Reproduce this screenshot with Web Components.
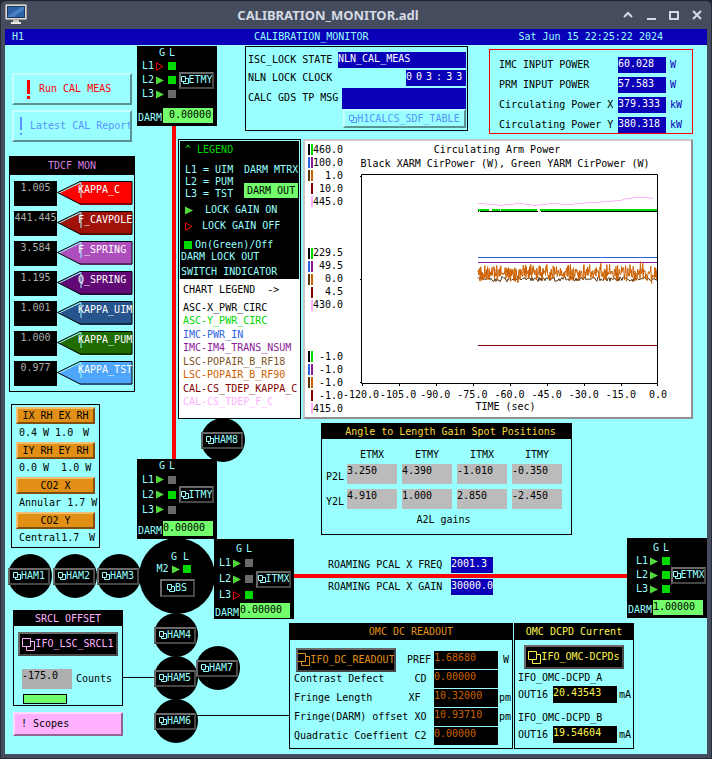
<!DOCTYPE html>
<html lang="en">
<head>
<meta charset="utf-8">
<title>CALIBRATION_MONITOR.adl</title>
<style>
  body { margin: 0; background: #232733; font: 10px/12px "DejaVu Sans Mono", "Liberation Mono", monospace; color: #000; }
</style>
</head>
<body>
<app-window heading="CALIBRATION_MONITOR.adl">
  <calibration-screen></calibration-screen>
</app-window>

<script>
const SHARED = `
  *, :host { box-sizing: border-box; }
  :host([hidden]) { display: none; }
  button { font: inherit; color: inherit; margin: 0; padding: 0; cursor: pointer; white-space: pre; border-radius: 0; }
  .row { display: flex; }
  svg { display: block; flex: none; }
`;

function define(name, render, ready) {
  customElements.define(name, class extends HTMLElement {
    connectedCallback() {
      if (this.shadowRoot) return;
      const t = document.createElement('template');
      const markup = render(n => this.getAttribute(n) ?? '', this).trim().replace(/>\s*\n\s*</g, '><');
      t.innerHTML = '<style>' + SHARED + '</style>' + markup;
      this.attachShadow({ mode: 'open' }).append(t.content.cloneNode(true));
      if (ready) ready(this);
    }
  });
}

/* Window frame */
define('app-window', a => `
  <style>
    :host { display: flex; flex-direction: column; min-height: 100vh; padding: 0 5px 5px; background: #444c5e;
      border-radius: 6px 6px 0 0; box-shadow: inset 0 1px #1d212b, inset 1px 0 #262b38, inset -1px 0 #262b38, inset 0 -1px #262b38; }
    header { display: flex; align-items: center; height: 29px; gap: 14px; padding-right: 5px; }
    h1 { flex: 1; margin: 0 0 0 6px; text-align: center; font: bold 13px/18px "Noto Sans", sans-serif; color: #d5dae4; }
    header button { border: 0; background: none; color: #d5dae4; width: 10px; }
    .tools { display: flex; gap: 13px; }
    slot { display: contents; }
  </style>
  <header>
    <svg width="22" height="21" viewBox="0 0 22 21"><rect x=".5" y=".5" width="21" height="15" rx="1" fill="#ddd9cf" stroke="#aaa69c"/><rect x="2" y="2" width="18" height="12" fill="#123768"/><path d="M3 3h16v10H3z" fill="#2d62a5"/><path d="M3 12 16 3h3v3L9 13H3z" fill="#477fc0"/><path d="M8 16h6v2H8z" fill="#c9c6be"/><path d="M6 18h10v2H6z" fill="#eceae4"/></svg>
    <h1>${a('heading')}</h1>
    <div class="tools">
      <button aria-label="Shade"><svg width="10" height="12" viewBox="0 0 10 12" fill="none" stroke="currentColor" stroke-width="2"><path d="M1 8l4-4 4 4"/></svg></button>
      <button aria-label="Minimize"><svg width="10" height="12" viewBox="0 0 10 12"><path d="M1 9h9v2H1z" fill="currentColor"/></svg></button>
      <button aria-label="Maximize"><svg width="10" height="12" viewBox="0 0 10 12" fill="none" stroke="currentColor" stroke-width="2"><path d="M1 3h8v7H1z"/></svg></button>
      <button aria-label="Close"><svg width="10" height="12" viewBox="0 0 10 12" fill="none" stroke="currentColor" stroke-width="2"><path d="M1 2l8 8M9 2l-8 8"/></svg></button>
    </div>
  </header>
  <slot></slot>`);

/* Bevelled push button */
define('bevel-button', (a, el) => {
  const big = '<svg width="13" height="13" viewBox="0 0 13 13" fill="none" stroke="currentColor"><path d="M.5.5h8v8h-8zM8.5 3.5h4v9h-8v-4"/></svg>';
  const small = '<svg width="8" height="8" viewBox="0 0 8 8" fill="none" stroke="currentColor"><path d="M.5.5h4v5h-4zM4.5 2.5h3v5h-5v-2"/></svg>';
  const icon = a('icon') === 'big' ? big : a('icon') === 'small' ? small : '';
  return `
  <style>
    :host { display: block; height: 17px; --face: #000; --hi: #696969; --lo: #464646; color: #99ffff; }
    :host([tone=cyan]) { --face: #99ffff; --hi: #c6ffff; --lo: #589392; }
    :host([tone=orange]) { --face: #e19015; --hi: #efbe70; --lo: #7f510c; color: #000; }
    :host([tone=pink]) { --face: #ffb0ff; --hi: #ffdcff; --lo: #916491; color: #000; }
    button { display: flex; align-items: center; justify-content: var(--align, center); width: 100%; height: 100%;
      padding-left: var(--pad, 0px); background: var(--face); border: 2px solid; border-color: var(--hi) var(--lo) var(--lo) var(--hi); overflow: hidden; }
    span { flex: none; }
  </style>
  <button>${icon}<slot name="mark"></slot><span><slot></slot></span></button>`;
});

/* Read-back field */
define('value-field', a => `
  <style>
    :host { display: block; width: 48px; height: 16px; background: #0a00b8; color: #fff; overflow: hidden; }
    :host([tone=green]) { width: 50px; height: 15px; background: #73ff6b; color: #000; }
    :host([tone=gray]) { width: 50px; height: 20px; background: #bbb; color: #000; }
    :host([tone=orange]) { width: 64px; height: 18px; background: #000; color: #cd6100; }
    :host([tone=yellow]) { width: 64px; height: 17px; background: #000; color: #fbf34a; }
    :host([tone=black]) { width: 43px; height: 25px; background: #000; color: #aeaeae; text-align: center; }
    output { display: block; line-height: 14px; white-space: pre; }
  </style>
  <output><slot></slot></output>`);

/* Outlined group with optional black caption */
define('group-box', a => `
  <style>
    :host { display: block; border: 1px solid #000; }
    h2 { margin: 0; background: #000; font: inherit; line-height: var(--cap, 15px); text-align: center; color: var(--cap-color); padding-left: var(--cap-pad, 0px); }
  </style>
  ${a('caption') ? `<h2>${a('caption')}</h2>` : ''}<slot></slot>`);

/* Calibration factor row: value and arrow tag */
define('factor-row', a => `
  <style>
    :host { display: flex; height: 25px; }
    div { display: grid; width: 76px; color: #fff; }
    div > * { grid-area: 1 / 1; }
    span { padding-left: 21px; line-height: 18px; }
  </style>
  <value-field tone="black">${a('value')}</value-field>
  <div><svg width="76" height="25" viewBox="0 0 76 25"><path d="M1 11.5 24 1h51v23H24z" fill="${a('color')}"/><path d="M2 12 24 1.500V17" fill="none" stroke="#99ffff"/><path d="M.5 11.500 23 .5h52V23H23z" fill="none" stroke="#000"/></svg><span>${a('name')}</span></div>`);

/* Gain arrow and lock-output lamp */
define('gain-arrow', a => `
  <style>:host { display: block; }</style>
  <svg width="8" height="9" viewBox="0 0 8 9">${a('state') === 'off'
    ? '<path d="M.5.800 7 4.500.5 8.200z" fill="none" stroke="#fd0000"/>'
    : '<path d="M0 .5 8 4.500 0 8.500z" fill="#52da3b"/>'}</svg>`);
define('output-lamp', a => `
  <style>:host { display: block; width: 8px; height: 8px; background: ${a('state') === 'off' ? '#696969' : '#00d800'}; }</style>`);

/* Suspended optic block */
define('optic-node', a => `
  <style>
    :host { display: flex; flex-direction: column; width: 80px; height: 80px; background: #000; color: #99ffff; --indent: 5px; --pitch: 14px; --top: 1px; --gap: 3px; }
    .head { padding: var(--top) 0 0 calc(var(--indent) + 17px); }
    .head span { width: 10px; }
    .body { display: flex; align-items: center; gap: var(--gap); }
    .levels { padding-left: var(--indent); }
    .levels .row { height: var(--pitch); align-items: center; }
    gain-arrow { margin: 0 4px 0 2px; }
    bevel-button { width: 35px; }
    .foot { align-items: flex-end; margin-top: auto; padding: 0 0 3px 1px; }
    .foot span { width: 25px; line-height: 10px; }
  </style>
  <div class="row head"><span>G</span><span>L</span></div>
  <div class="body">
    <div class="levels">${[1, 2, 3].map(n => `<div class="row"><span>L${n}</span><gain-arrow state="${a('gain').split(' ')[n - 1]}"></gain-arrow><output-lamp state="${a('out').split(' ')[n - 1]}"></output-lamp></div>`).join('')}</div>
    <bevel-button icon="small">${a('name')}</bevel-button>
  </div>
  <div class="row foot"><span>DARM</span><value-field tone="green">${a('darm')}</value-field></div>`);

/* Round vacuum chamber */
define('chamber-node', a => `
  <style>
    :host { display: flex; align-items: center; width: 44px; height: 44px; border-radius: 50%; background: #000; }
    bevel-button { width: 42px; }
  </style>
  <bevel-button icon="small">${a('name')}</bevel-button>`);

/* Beam splitter */
define('splitter-node', () => `
  <style>
    :host { display: flex; flex-direction: column; align-items: center; width: 76px; height: 76px; padding-top: 13px; border-radius: 50%; background: #000; color: #99ffff; }
    .head { gap: 6px; padding-left: 6px; }
    .lvl { align-items: center; gap: 3px; padding-right: 7px; }
    bevel-button { width: 35px; height: 18px; margin-top: 4px; }
  </style>
  <div class="row head"><span>G</span><span>L</span></div>
  <div class="row lvl"><span>M2</span><gain-arrow></gain-arrow><output-lamp></output-lamp></div>
  <bevel-button icon="small">BS</bevel-button>`);

/* Legend */
define('screen-legend', () => `
  <style>
    :host { display: flex; flex-direction: column; background: #fff; border: 1px solid #000; width: 123px; }
    .dark { background: #000; color: #99ffff; border: 1px solid #99ffff; border-bottom: 0; height: 139px; padding: 3px 1px 0; }
    .title { color: #00d800; padding: 0 4px 8px; }
    .levels { justify-content: space-between; padding-left: 4px; height: 36px; white-space: nowrap; }
    .levels > div:last-child { width: 54px; }
    .out { background: #73ff6b; color: #000; line-height: 15px; padding-left: 3px; margin-top: 7px; }
    .key { align-items: center; height: 16px; padding-left: 4px; gap: 12px; margin-top: 2px; }
    .key + .key { margin-top: 0; gap: 9px; }
    .lamp { align-items: center; gap: 3px; padding: 5px 0 0 3px; }
    .last { padding-top: 3px; }
    .light { flex: 1; display: flex; flex-direction: column; padding: 5px 4px 10px; white-space: pre; }
    ul { list-style: none; margin: 6px 0 0; padding: 0; flex: 1; display: flex; flex-direction: column; justify-content: space-between; }
  </style>
  <div class="dark">
    <div class="title">^ LEGEND</div>
    <div class="row levels"><div>L1 = UIM<br>L2 = PUM<br>L3 = TST</div><div><div>DARM MTRX</div><div class="out">DARM OUT</div></div></div>
    <div class="row key"><gain-arrow></gain-arrow><span>LOCK GAIN ON</span></div>
    <div class="row key"><gain-arrow state="off"></gain-arrow><span>LOCK GAIN OFF</span></div>
    <div class="row lamp"><output-lamp></output-lamp><span>On(Green)/Off</span></div>
    <div>DARM LOCK OUT</div>
    <div class="last">SWITCH INDICATOR</div>
  </div>
  <div class="light"><div>CHART LEGEND  -&gt;</div>
    <ul>
      <li>ASC-X_PWR_CIRC</li><li style="color:#00d800">ASC-Y_PWR_CIRC</li><li style="color:#2a63e4">IMC-PWR_IN</li>
      <li style="color:#8b1a96">IMC-IM4_TRANS_NSUM</li><li style="color:#7d5627">LSC-POPAIR_B_RF18</li><li style="color:#cd6100">LSC-POPAIR_B_RF90</li>
      <li style="color:#820400">CAL-CS_TDEP_KAPPA_C</li><li style="color:#ffb0ff">CAL-CS_TDEP_F_C</li>
    </ul>
  </div>`);

/* Strip chart */
define('strip-chart', () => {
  const bars = [['#000', '#00d800'], ['#2a63e4', '#8b1a96'], ['#58340f', '#cd6100'], ['transparent', '#820400'], ['transparent', '#ffb0ff']];
  const scales = [['460.0', '100.0', '1.0', '10.0', '445.0'], ['229.5', '49.5', '0.0', '4.5', '430.0'], ['-1.0', '-1.0', '-1.0', '-1.0', '415.0']];
  let seed = 11;
  const rnd = () => (seed = (seed * 16807) % 2147483647) / 2147483647;
  const noise = (mid, amp, step, spike) => {
    let d = '';
    for (let x = 117; x <= 296; x += step) {
      let y = mid + (rnd() + rnd() - 1) * amp;
      if (rnd() < spike) y += (rnd() - .5) * 12;
      d += (d ? 'L' : 'M') + x.toFixed(1) + ' ' + y.toFixed(1);
    }
    return d;
  };
  return `
  <style>
    :host { display: grid; grid-template: 31px 1fr 33px / 35px minmax(0, 1fr); column-gap: 18px; background: #fff; padding: 2px 33px 0 3px;
      border: 2px solid; border-color: #c8c8c8 #919191 #919191 #c8c8c8; }
    .scales { grid-area: 1 / 1 / 4 / 2; display: flex; flex-direction: column; justify-content: space-between; padding-bottom: 2px; }
    .scale { height: 13px; align-items: center; }
    .scale i { width: 2px; height: 11px; margin-right: 1px; }
    .scale span { flex: 1; display: flex; justify-content: flex-end; margin-left: -2px; }
    h3 { grid-area: 1 / 2; margin: 0; font: inherit; line-height: 14px; white-space: nowrap; display: flex; flex-direction: column; align-items: center; }
    h3 span:first-child { margin-right: 25px; }
    h3 span + span { margin-right: 9px; }
    .plot { grid-area: 2 / 2; width: 100%; height: 100%; overflow: visible; }
    .plot path { vector-effect: non-scaling-stroke; fill: none; }
    .axis { grid-area: 3 / 2; }
    .ticks { justify-content: space-between; padding-top: 5px; }
    .ticks span { width: 0; display: flex; justify-content: center; }
    .ticks i { font-style: normal; flex: none; }
    .time { text-align: center; padding-right: 8px; }
  </style>
  <div class="scales">${scales.map(s => `<div>${s.map((v, i) => `<div class="row scale"><i style="background:${bars[i][0]}"></i><i style="background:${bars[i][1]}"></i><span>${v}</span></div>`).join('')}</div>`).join('')}</div>
  <h3><span>Circulating Arm Power</span><span>Black XARM CirPower (W), Green YARM CirPower (W)</span></h3>
  <svg class="plot" viewBox="0 0 297 210" preserveAspectRatio="none">
    <path stroke="#ffb0ff" d="M117 29.500h6l5 1h8l2 1h4l3-1h7l2-1h8l2 1h5l3 1h4l3-1h6l3-1h9l3 1h12l3-1h8l3-1h13l3-1h8l4-1h6l5-2h5l4-1h13l5 1"/>
    <path stroke="#00d800" stroke-width="2" d="M117 36h11m3 0h8m1 0h36m3 0h117"/><path stroke="#000" d="M117 37.500h1m1 0h58m3 0h117"/>
    <path stroke="#2a63e4" d="M117 83.500h180"/><path stroke="#8b1a96" d="M117 88.500h180"/>
    <path stroke="#58340f" d="${noise(105, 3, 1, 0)}"/><path stroke="#cd6100" d="${noise(99, 10, .4, .1)}"/>
    <path stroke="#820400" d="M117 171.500h180"/>
    <path stroke="#000" d="M.5.5h296v209H.5zM-1 2.500h2M-1 105.500h2M-1 208.500h2M1.500 210v2M38.500 210v2M75.500 210v2M112.500 210v2M149.500 210v2M186.500 210v2M223.500 210v2M260.500 210v2M296.500 210v2"/>
  </svg>
  <div class="axis">
    <div class="row ticks">${['-120.0', '-105.0', '-90.0', '-75.0', '-60.0', '-45.0', '-30.0', '-15.0', '0.0'].map(v => `<span><i>${v}</i></span>`).join('')}</div>
    <div class="time">TIME (sec)</div>
  </div>`;
});

/* Angle-to-length table */
define('spot-table', () => {
  const rows = [['P2L', '3.250', '4.390', '-1.010', '-0.350'], ['Y2L', '4.910', '1.000', '2.850', '-2.450']];
  return `
  <style>
    :host { display: block; padding: 10px 0 8px; }
    table { border-collapse: collapse; table-layout: fixed; width: 245px; }
    th { font: inherit; padding: 0; vertical-align: middle; }
    thead th { padding: 0 5px 3px 0; width: 55px; }
    th:first-child { width: 25px; padding: 0 0 0 4px; text-align: left; }
    td { padding: 0 5px 5px 0; }
    .note { text-align: center; line-height: 12px; padding-right: 6px; }
  </style>
  <table><thead><tr><th></th><th>ETMX</th><th>ETMY</th><th>ITMX</th><th>ITMY</th></tr></thead>
  <tbody>${rows.map(r => `<tr><th scope="row">${r[0]}</th>${r.slice(1).map(v => `<td><value-field tone="gray">${v}</value-field></td>`).join('')}</tr>`).join('')}</tbody></table>
  <div class="note">A2L gains</div>`;
});

/* Label, value and unit line */
define('reading-line', a => `
  <style>
    :host { display: flex; align-items: center; white-space: pre; }
    .label { flex: 1; }
    .unit { width: var(--unit, 14px); padding-left: var(--unit-pad, 4px); color: var(--unit-color, inherit); }
  </style>
  <slot name="lead"></slot><span class="label">${a('label')}</span><slot></slot><span class="unit">${a('unit')}</span>`);

/* Whole screen */
define('calibration-screen', () => `
  <style>
    :host { flex: 1; display: flex; flex-direction: column; background: #99ffff; }
    .bar { background: #0a00b8; color: #99ffff; height: 16px; line-height: 15px; padding: 0 44px 0 7px; }
    .bar .name { margin-left: 230px; }
    .bar time { margin-left: auto; }
    main { position: relative; flex: 1; display: grid; grid-template-columns: 126px minmax(0, 1fr); column-gap: 43px; padding: 1px 14px 5px 4px; }
    .left { display: flex; flex-direction: column; align-items: flex-start; padding-top: 27px; }
    .action { width: 120px; height: 32px; margin: 0 0 5px 3px; --align: flex-start; }
    .run { color: #fd0000; --pad: 12px; }
    .run svg { margin-right: 8px; }
    .latest { color: #5893ff; --pad: 5px; }
    .latest svg { margin-right: 7px; }
    .tdcf { --cap-color: #d67fe2; --cap: 18px; width: 126px; margin-top: 9px; }
    .tdcf factor-row { margin: 6px 0 5px 4px; }
    .tdcf factor-row + factor-row { margin-top: 5px; }
    .heaters { width: 89px; margin: 12px 0 0 2px; padding: 2px 4px 0; }
    .heaters .row { height: 18px; align-items: center; gap: 6px; white-space: pre; padding-left: 3px; }
    .heaters .row span:last-child { margin-left: auto; }
    .src { --cap-color: #ffb0ff; width: 110px; margin: 62px 0 0 4px; }
    .src .body { padding: 6px 4px 1px; }
    .src bevel-button { height: 24px; color: #ffb0ff; }
    .src .row { gap: 4px; align-items: center; padding: 13px 0 5px 4px; }
    .src .meter { width: 44px; height: 10px; margin-left: 5px; border: 1px solid #000; background: #73ff6b; }
    .src value-field { background: #aeaeae; }
    .scopes { width: 110px; height: 24px; margin: 6px 0 0 4px; --align: flex-start; --pad: 6px; }
    .right { display: flex; flex-direction: column; min-width: 0; }
    .top { height: 93px; padding-left: 67px; gap: 21px; align-items: flex-start; }
    .lock { flex: none; width: 223px; height: 85px; padding: 4px 1px 0 2px; }
    .lock .line { display: flex; justify-content: space-between; align-items: center; height: 18px; }
    .lock .line:nth-child(3) { height: 22px; }
    .lock .state { width: 128px; }
    .lock .clock { width: 60px; }
    .lock .message { width: 124px; height: 21px; }
    .clock b { display: flex; gap: 4px; font-weight: normal; }
    .lock bevel-button { width: 123px; height: 19px; margin-left: auto; color: #5893ff; }
    .power { flex: 1; margin-top: 3px; border-color: #fd0000; padding: 5px 0 0 9px; height: 85px; --unit: 26px; --unit-color: #0a00b8; }
    .power reading-line { height: 20px; }
    .charts { gap: 2px; height: 280px; }
    strip-chart { flex: 1; min-width: 0; }
    .a2l { --cap-color: #f9da3c; --cap-pad: 8px; width: 251px; margin: 4px 0 0 143px; }
    .pcal { width: 165px; margin: 22px 0 0 150px; --unit: 0px; --unit-pad: 0px; }
    .pcal value-field { width: 42px; }
    .pcal reading-line + reading-line { margin-top: 6px; }
    .omc { margin: 28px 0 0 111px; gap: 1px; align-items: stretch; }
    .dc { --cap-color: #e19015; --cap: 16px; --cap-pad: 20px; --unit-pad: 1px; width: 224px; }
    .dc .body { padding: 10px 0 1px 4px; }
    .dc reading-line { height: 19px; }
    .dc reading-line:first-child { --unit-pad: 5px; }
    .dc bevel-button { width: 100px; height: 24px; margin: 0 11px 0 2px; color: #e19015; }
    .dcpd { --cap-color: #fbf34a; --cap: 16px; width: 120px; --unit: 16px; --unit-pad: 2px; }
    .dcpd .body { padding: 5px 0 5px 3px; }
    .dcpd bevel-button { width: 100px; height: 24px; margin: 0 0 3px 6px; color: #fbf34a; }
    .dcpd p { margin: 0; }
    .dcpd p + reading-line { height: 17px; margin: 2px 0 9px; }
    .dcpd reading-line:last-child { margin-bottom: 0; }
    /* Free-canvas interferometer diagram */
    .diagram > * { position: absolute; }
    .beam { background: #fd0000; }
    .wire { background: #000; height: 1px; }
  </style>
  <div class="row bar"><span>H1</span><span class="name">CALIBRATION_MONITOR</span><time>Sat Jun 15 22:25:22 2024</time></div>
  <main>
    <div class="left">
      <bevel-button class="action run" tone="cyan"><svg slot="mark" width="5" height="20" viewBox="0 0 5 20"><path d="M1 1h3v14H1zM1 17h3v3H1z" fill="currentColor"/></svg>Run CAL MEAS</bevel-button>
      <bevel-button class="action latest" tone="cyan"><svg slot="mark" width="4" height="20" viewBox="0 0 4 20"><path d="M1 1h2v13H1zM1 17h2v2H1z" fill="currentColor"/></svg>Latest CAL Report</bevel-button>
      <group-box class="tdcf" caption="TDCF MON">
        <factor-row value="1.005" name="KAPPA_C" color="#fd0000"></factor-row>
        <factor-row value="441.445" name="F_CAVPOLE" color="#a01207"></factor-row>
        <factor-row value="3.584" name="F_SPRING" color="#ae4ebc"></factor-row>
        <factor-row value="1.195" name="Q_SPRING" color="#610a75"></factor-row>
        <factor-row value="1.001" name="KAPPA_UIM" color="#27548d"></factor-row>
        <factor-row value="1.000" name="KAPPA_PUM" color="#216c00"></factor-row>
        <factor-row value="0.977" name="KAPPA_TST" color="#4ea5f9"></factor-row>
      </group-box>
      <group-box class="heaters">
        <bevel-button tone="orange">IX RH EX RH</bevel-button>
        <div class="row"><span>0.4</span><span>W</span><span>1.0</span><span>W </span></div>
        <bevel-button tone="orange">IY RH EY RH</bevel-button>
        <div class="row"><span>0.0</span><span>W</span><span> 1.0</span><span>W </span></div>
        <bevel-button tone="orange">CO2 X</bevel-button>
        <div class="row"><span>Annular</span><span>1.7</span><span>W</span></div>
        <bevel-button tone="orange">CO2 Y</bevel-button>
        <div class="row"><span>Central1.7</span><span>W</span></div>
      </group-box>
      <group-box class="src" caption="SRCL OFFSET"><div class="body">
        <bevel-button icon="big">IFO_LSC_SRCL1</bevel-button>
        <div class="row"><value-field tone="gray">-175.0</value-field><span>Counts</span></div>
        <div class="meter"></div></div>
      </group-box>
      <bevel-button class="scopes" tone="pink">! Scopes</bevel-button>
    </div>
    <div class="right">
      <div class="row top">
        <group-box class="lock">
          <div class="line"><span>ISC_LOCK STATE</span><value-field class="state">NLN_CAL_MEAS</value-field></div>
          <div class="line"><span>NLN LOCK CLOCK</span><value-field class="clock"><b><span>0</span><span>0</span><span>3</span><span>:</span><span>3</span><span>3</span></b></value-field></div>
          <div class="line"><span>CALC GDS TP MSG</span><value-field class="message"></value-field></div>
          <bevel-button tone="cyan" icon="small">H1CALCS_SDF_TABLE</bevel-button>
        </group-box>
        <group-box class="power">
          <reading-line label="IMC INPUT POWER" unit="W"><value-field>60.028</value-field></reading-line>
          <reading-line label="PRM INPUT POWER" unit="W"><value-field>57.583</value-field></reading-line>
          <reading-line label="Circulating Power X" unit="kW"><value-field>379.333</value-field></reading-line>
          <reading-line label="Circulating Power Y" unit="kW"><value-field>380.318</value-field></reading-line>
        </group-box>
      </div>
      <div class="row charts"><screen-legend></screen-legend><strip-chart></strip-chart></div>
      <group-box class="a2l" caption="Angle to Length Gain Spot Positions"><spot-table></spot-table></group-box>
      <div class="pcal">
        <reading-line label="ROAMING PCAL X FREQ"><value-field>2001.3</value-field></reading-line>
        <reading-line label="ROAMING PCAL X GAIN"><value-field>30000.0</value-field></reading-line>
      </div>
      <div class="row omc">
        <group-box class="dc" caption="OMC DC READOUT"><div class="body">
          <reading-line label="PREF" unit="W"><bevel-button slot="lead" icon="big">IFO_DC_READOUT</bevel-button><value-field tone="orange">1.68680</value-field></reading-line>
          <reading-line label="Contrast Defect     CD"><value-field tone="orange">0.00000</value-field></reading-line>
          <reading-line label="Fringe Length      XF" unit="pm"><value-field tone="orange">10.32000</value-field></reading-line>
          <reading-line label="Fringe(DARM) offset XO" unit="pm"><value-field tone="orange">10.93710</value-field></reading-line>
          <reading-line label="Quadratic Coeffient C2"><value-field tone="orange">0.00000</value-field></reading-line></div>
        </group-box>
        <group-box class="dcpd" caption="OMC DCPD Current"><div class="body">
          <bevel-button icon="big">IFO_OMC-DCPDs</bevel-button>
          <p>IFO_OMC-DCPD_A</p>
          <reading-line label="OUT16" unit="mA"><value-field tone="yellow">20.43543</value-field></reading-line>
          <p>IFO_OMC-DCPD_B</p>
          <reading-line label="OUT16" unit="mA"><value-field tone="yellow">19.54604</value-field></reading-line></div>
        </group-box>
      </div>
    </div>
    <div class="diagram">
      <div class="beam" style="left:167px;top:81px;width:4px;height:333px"></div>
      <div class="beam" style="left:289px;right:80px;top:529px;height:4px"></div>
      <div class="wire" style="left:117px;top:632px;width:32px"></div>
      <div class="wire" style="left:192px;top:670px;width:92px"></div>
      <splitter-node style="left:134px;top:493px"></splitter-node>
      <optic-node style="left:132px;top:1px" name="ETMY" gain="off on on" out="on on off" darm=" 0.00000"></optic-node>
      <optic-node style="left:132px;top:414px;--pitch:15px" name="ITMY" gain="on on on" out="off on off" darm="0.00000"></optic-node>
      <optic-node style="left:209px;top:494px;--pitch:16px;--top:4px" name="ITMX" gain="on on off" out="off off on" darm="0.00000"></optic-node>
      <optic-node style="right:0;top:493px;--indent:9px;--top:4px;--gap:1px" name="ETMX" gain="on on on" out="on on on" darm="1.00000"></optic-node>
      <chamber-node style="left:3px;top:509px" name="HAM1"></chamber-node>
      <chamber-node style="left:48px;top:509px" name="HAM2"></chamber-node>
      <chamber-node style="left:92px;top:509px" name="HAM3"></chamber-node>
      <chamber-node style="left:196px;top:373px" name="HAM8"></chamber-node>
      <chamber-node style="left:149px;top:568px" name="HAM4"></chamber-node>
      <chamber-node style="left:149px;top:611px" name="HAM5"></chamber-node>
      <chamber-node style="left:149px;top:654px" name="HAM6"></chamber-node>
      <chamber-node style="left:191px;top:601px" name="HAM7"></chamber-node>
    </div>
  </main>`);
</script>
</body>
</html>
